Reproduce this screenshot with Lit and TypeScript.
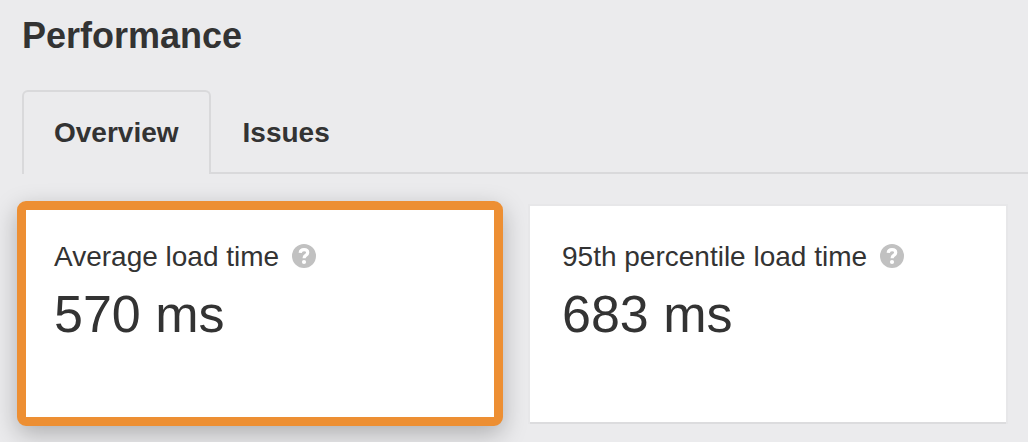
import { LitElement, html, css } from "lit";
import { customElement, property, state } from "lit/decorators.js";
import { classMap } from "lit/directives/class-map.js";

@customElement("metric-card")
class MetricCard extends LitElement {
  @property() label = "";
  @property() value = "";
  @property({ type: Boolean, reflect: true }) highlighted = false;

  static styles = css`
    :host {
      display: block;
      box-sizing: border-box;
      padding: 35px 32px 78px;
      background: #fff;
      box-shadow: 0 2px 0 #dcdcde, 0 0 0 2px #e7e7e9;
    }
    :host([highlighted]) {
      margin: -5px -5px -4px;
      padding: 31px 28px 73px;
      border: 9px solid #ed8f33;
      border-radius: 9px;
      box-shadow: 0 8px 24px rgba(0, 0, 0, 0.26);
    }
    .label {
      display: flex;
      align-items: flex-start;
      gap: 13px;
      margin: 0;
      font-size: 28px;
      font-weight: 400;
      line-height: 32px;
    }
    .help {
      display: block;
      width: 24px;
      height: 24px;
      margin: 3px 0 0;
      padding: 0;
      border: 0;
      border-radius: 50%;
      background: none;
      cursor: pointer;
    }
    .icon {
      display: block;
    }
    .value {
      margin: 11px 0 0;
      font-size: 52px;
      line-height: 60px;
    }
  `;

  render() {
    return html`
      <h2 class="label">
        ${this.label}
        <button class="help" type="button" aria-label="About ${this.label}">
          <svg class="icon" width="24" height="24" viewBox="0 0 24 24" aria-hidden="true">
            <circle cx="12" cy="12" r="12" fill="#c1c1c1" />
            <path
              d="M8.2 8.8C8.4 6.8 9.8 5.6 12 5.6c2.2 0 3.7 1.1 3.7 2.9 0 1.4-.8 2.1-1.9 2.8-1.2.8-1.7 1.3-1.7 2.9"
              fill="none"
              stroke="#fff"
              stroke-width="3.2"
            />
            <circle cx="12" cy="18" r="2.1" fill="#fff" />
          </svg>
        </button>
      </h2>
      <p class="value">${this.value}</p>
    `;
  }
}

@customElement("app-root")
class AppRoot extends LitElement {
  @state() private active = "Overview";

  private tabs = ["Overview", "Issues"];

  private metrics = [
    { label: "Average load time", value: "570 ms", highlighted: true },
    { label: "95th percentile load time", value: "683 ms", highlighted: false },
  ];

  static styles = css`
    :host {
      display: block;
      box-sizing: border-box;
      min-height: 100vh;
      padding: 14px 0 18px 22px;
      background: #ebebed;
      color: #333;
      font-family: "Helvetica Neue", "Liberation Sans", Arial, sans-serif;
    }
    .title {
      margin: 0 0 32px;
      font-size: 36px;
      font-weight: 700;
      line-height: 44px;
    }
    .tabs {
      display: flex;
    }
    .tabs::after {
      content: "";
      flex: 1;
      border-bottom: 2px solid #d9d9db;
    }
    .tab {
      padding: 25px 32px 23px;
      border: solid transparent;
      border-width: 2px 0;
      border-bottom-color: #d9d9db;
      background: none;
      color: inherit;
      font: 700 28px/32px "Helvetica Neue", "Liberation Sans", Arial, sans-serif;
      cursor: pointer;
    }
    .tab.active {
      padding: 25px 30px;
      border-width: 2px 2px 0;
      border-color: #d9d9db;
      border-radius: 6px 6px 0 0;
    }
    .cards {
      display: grid;
      grid-template-columns: repeat(2, minmax(0, 1fr));
      gap: 32px;
      padding: 32px 22px 0 0;
    }
  `;

  render() {
    return html`
      <h1 class="title">Performance</h1>
      <div class="tabs" role="tablist">
        ${this.tabs.map(
          (tab) => html`<button
            type="button"
            role="tab"
            class=${classMap({ tab: true, active: tab === this.active })}
            aria-selected=${tab === this.active ? "true" : "false"}
            @click=${() => (this.active = tab)}
          >${tab}</button>`
        )}
      </div>
      <div class="cards">
        ${this.metrics.map(
          (m) => html`<metric-card
            .label=${m.label}
            .value=${m.value}
            ?highlighted=${m.highlighted}
          ></metric-card>`
        )}
      </div>
    `;
  }
}
